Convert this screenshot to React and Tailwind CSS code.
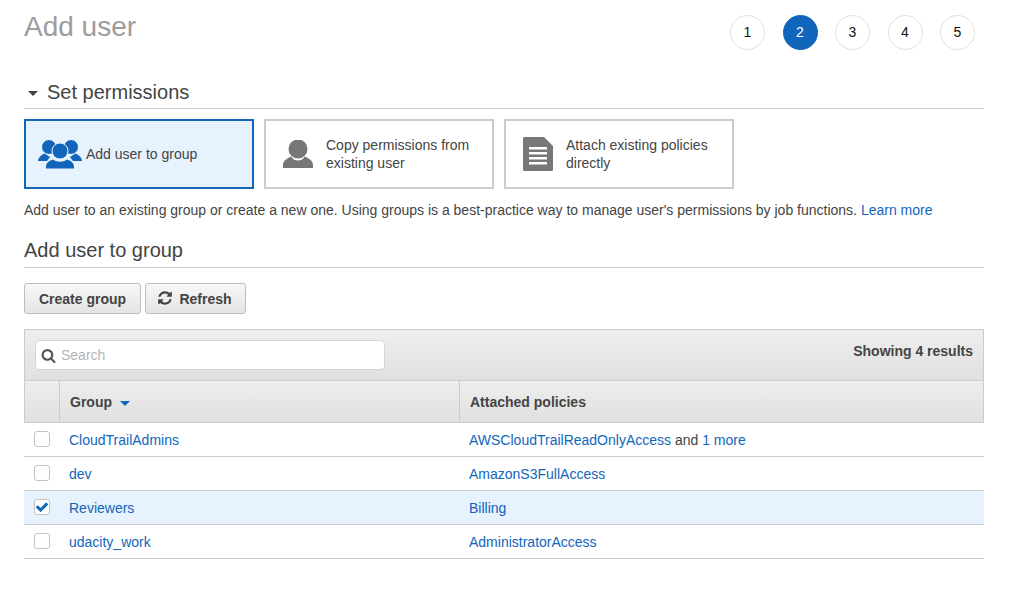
import React from 'react';

const steps = [1, 2, 3, 4, 5];

const groups = [
    { name: 'CloudTrailAdmins', policy: 'AWSCloudTrailReadOnlyAccess', more: '1 more' },
    { name: 'dev', policy: 'AmazonS3FullAccess' },
    { name: 'Reviewers', policy: 'Billing', checked: true },
    { name: 'udacity_work', policy: 'AdministratorAccess' },
];

const GlyphIcon = ({ d, className }) => (
    <svg viewBox="0 0 1792 1792" className={className} fill="currentColor">
        <path d={d} />
    </svg>
);

const refreshPath = 'M1639 1056q0 5-1 7-64 268-268 434.5t-478 166.5q-146 0-282.5-55t-243.5-157l-129 129q-19 19-45 19t-45-19-19-45v-448q0-26 19-45t45-19h448q26 0 45 19t19 45-19 45l-137 137q71 66 161 102t187 36q134 0 250-65t186-179q11-17 53-117 8-23 30-23h192q13 0 22.5 9.5t9.5 22.5zm25-800v448q0 26-19 45t-45 19h-448q-26 0-45-19t-19-45 19-45l138-138q-148-137-349-137-134 0-250 65t-186 179q-11 17-53 117-8 23-30 23h-199q-13 0-22.5-9.5t-9.5-22.5v-7q65-268 270-434.5t480-166.5q146 0 284 55.5t245 156.5l130-129q19-19 45-19t45 19 19 45z';
const searchPath = 'M1216 832q0-185-131.5-316.5t-316.5-131.5-316.5 131.5-131.5 316.5 131.5 316.5 316.5 131.5 316.5-131.5 131.5-316.5zm512 832q0 52-38 90t-90 38q-54 0-90-38l-343-342q-179 124-399 124-143 0-273.5-55.5t-225-150-150-225-55.5-273.5 55.5-273.5 150-225 225-150 273.5-55.5 273.5 55.5 225 150 150 225 55.5 273.5q0 220-124 399l343 343q37 37 37 90z';
const checkPath = 'M1671 566q0 40-28 68l-724 724-136 136q-28 28-68 28t-68-28l-136-136-362-362q-28-28-28-68t28-68l136-136q28-28 68-28t68 28l294 295 656-657q28-28 68-28t68 28l136 136q28 28 28 68z';

const PersonIcon = ({ className }) => (
    <svg viewBox="0 0 30 28" className={className} fill="currentColor">
        <circle cx="15" cy="9" r="9.5" />
        <path d="M0 28 V25 C0 20.5 4.5 18 8.5 16.5 C10 19.5 12.5 20.5 15 20.5 C17.5 20.5 20 19.5 21.5 16.5 C25.5 18 30 20.5 30 25 V28 Z" />
    </svg>
);

const GroupIcon = ({ className }) => (
    <svg viewBox="0 0 44 29" className={className} fill="currentColor">
        <circle cx="11" cy="7" r="7" />
        <circle cx="33" cy="7" r="7" />
        <path d="M0 21 C0.5 17 3.5 15 6.5 13.5 L12 17 L9 21 Z" />
        <path d="M44 21 C43.5 17 40.5 15 37.5 13.5 L32 17 L35 21 Z" />
        <circle cx="22" cy="11" r="8" stroke="#e6f2fd" strokeWidth="1" />
        <path d="M8 28.5 V26.5 C8 23 11.5 20.8 15 19.6 C17 21.3 19.5 21.8 22 21.8 C24.5 21.8 27 21.3 29 19.6 C32.5 20.8 36 23 36 26.5 V28.5 Z" />
    </svg>
);

const DocIcon = ({ className }) => (
    <svg viewBox="0 0 30 34" className={className}>
        <path d="M1.5 0 H21 L30 9 V32.5 A1.5 1.5 0 0 1 28.5 34 H1.5 A1.5 1.5 0 0 1 0 32.5 V1.5 A1.5 1.5 0 0 1 1.5 0 Z" fill="#777777" />
        <path d="M6 10 H24 V12.5 H6 Z M6 15 H24 V17.5 H6 Z M6 20 H24 V22.5 H6 Z M6 25 H24 V27.5 H6 Z" fill="#ffffff" />
    </svg>
);

const Caret = ({ className }) => (
    <span className={`inline-block w-0 h-0 border-x-[5px] border-x-transparent border-t-[5px] ${className}`} />
);

const Checkbox = ({ checked }) => (
    <div className="w-4 h-4 -mt-[2px] rounded-[3px] border border-[#c4c4c4] bg-white flex items-center justify-center">
        {checked && <GlyphIcon d={checkPath} className="w-[14px] h-[14px] text-[#1166bb]" />}
    </div>
);

const App = () => {
    return (
        <div className="w-[1025px] h-[606px] bg-white px-6 text-[14px] text-[#444444] overflow-hidden font-['Liberation_Sans',Arial,sans-serif]">
            <div className="w-[960px]">
                {/* Header */}
                <div className="flex justify-between h-[75px]">
                    <h1 className="text-[28px] leading-[32px] mt-[11px] text-[#a09c9c]">Add user</h1>
                    <div className="flex gap-[17.5px] mt-[15px] mr-[9px] h-[35px]">
                        {steps.map((s) => (
                            <div
                                key={s}
                                className={`w-[35px] h-[35px] rounded-full flex items-center justify-center border ${s === 2 ? 'bg-[#1166bb] border-[#1166bb] text-white' : 'border-[#e1e1e1] text-[#111111]'}`}
                            >
                                {s}
                            </div>
                        ))}
                    </div>
                </div>

                {/* Set permissions */}
                <div className="flex items-center h-[34px] border-b border-[#cccccc]">
                    <Caret className="border-t-[#444444] ml-[4px] mr-[9px] mt-[3px]" />
                    <h2 className="text-[20px] leading-[32px]">Set permissions</h2>
                </div>

                <div className="flex gap-[10px] mt-[10px]">
                    <div className="w-[230px] h-[70px] border-2 border-[#1166bb] bg-[#e6f2fd] flex items-center pl-[12px]">
                        <GroupIcon className="w-[44px] h-[29px] text-[#1166bb] mr-[4px] shrink-0" />
                        <span>Add user to group</span>
                    </div>
                    <div className="w-[230px] h-[70px] border-2 border-[#cccccc] flex items-center pl-[17px]">
                        <PersonIcon className="w-[30px] h-[28px] text-[#777777] mr-[13px] shrink-0" />
                        <span className="leading-[18px] w-[160px]">Copy permissions from existing user</span>
                    </div>
                    <div className="w-[230px] h-[70px] border-2 border-[#cccccc] flex items-center pl-[17px]">
                        <DocIcon className="w-[30px] h-[34px] mr-[13px] shrink-0" />
                        <span className="leading-[18px] w-[160px]">Attach existing policies directly</span>
                    </div>
                </div>

                <p className="mt-[12px] leading-[18px]">
                    Add user to an existing group or create a new one. Using groups is a best-practice way to manage user's permissions by job functions.{' '}
                    <a className="text-[#1166bb]">Learn more</a>
                </p>

                {/* Add user to group */}
                <div className="mt-[13px] h-[36px] border-b border-[#cccccc] flex items-center">
                    <h2 className="text-[20px] leading-[32px]">Add user to group</h2>
                </div>

                <div className="flex gap-[4px] mt-[15px]">
                    <button className="w-[117px] h-[31px] pt-[1px] rounded-[3px] border border-[#bdbdbd] bg-gradient-to-b from-[#f8f8f8] to-[#e4e4e4] font-bold">Create group</button>
                    <button className="w-[101px] h-[31px] pt-[1px] rounded-[3px] border border-[#bdbdbd] bg-gradient-to-b from-[#f8f8f8] to-[#e4e4e4] font-bold flex items-center justify-center gap-[6px]">
                        <GlyphIcon d={refreshPath} className="w-[16px] h-[16px] -ml-[2px] -mt-[2px] text-[#444444]" />
                        Refresh
                    </button>
                </div>

                {/* Groups table */}
                <div className="mt-[15px]">
                    <div className="h-[52px] border border-[#cccccc] bg-gradient-to-b from-[#eeeeee] to-[#e0e0e0] flex justify-between pl-[10px] pr-[10px] pt-[10px]">
                        <div className="w-[350px] h-[30px] bg-white rounded-[4px] border border-[#d5d5d5] flex items-center pl-[5px] gap-[5px]">
                            <GlyphIcon d={searchPath} className="w-[15px] h-[15px] text-[#555555]" />
                            <span className="text-[#b4b4b4]">Search</span>
                        </div>
                        <span className="font-bold leading-[22px]">Showing 4 results</span>
                    </div>
                    <div className="h-[42px] flex border-x border-b border-[#cccccc] bg-gradient-to-b from-[#eeeeee] to-[#e0e0e0] font-bold">
                        <div className="w-[35px] border-r border-[#cccccc]" />
                        <div className="w-[400px] border-r border-[#cccccc] flex items-center pl-[10px] pt-[1px]">
                            Group
                            <Caret className="border-t-[#1166bb] ml-[8px] mt-[2px]" />
                        </div>
                        <div className="flex-1 flex items-center pl-[10px] pt-[1px]">Attached policies</div>
                    </div>
                    {groups.map((g) => (
                        <div key={g.name} className={`h-[34px] flex items-center border-b border-[#cccccc] ${g.checked ? 'bg-[#e6f2fd]' : ''}`}>
                            <div className="w-[45px] pl-[10px]">
                                <Checkbox checked={g.checked} />
                            </div>
                            <a className="w-[400px] pt-[1px] text-[#1166bb]">{g.name}</a>
                            <div className="pt-[1px]">
                                <a className="text-[#1166bb]">{g.policy}</a>
                                {g.more && <> and <a className="text-[#1166bb]">{g.more}</a></>}
                            </div>
                        </div>
                    ))}
                </div>
            </div>
        </div>
    );
};

export default App;
